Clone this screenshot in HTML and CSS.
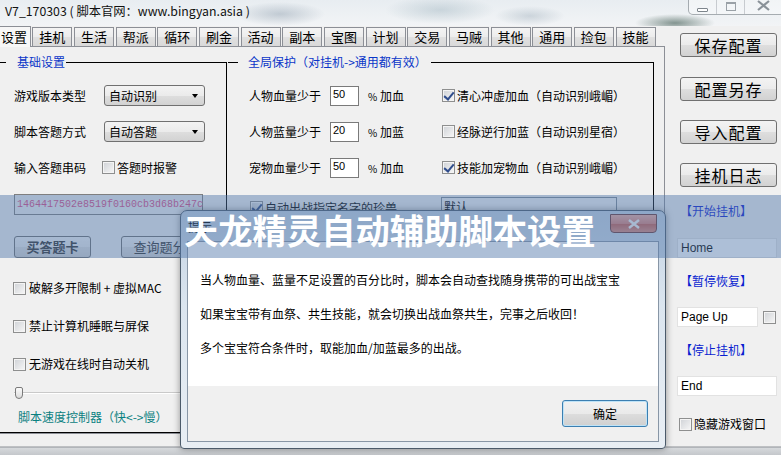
FILE: index.html
```html
<!DOCTYPE html>
<html lang="zh-CN">
<head>
  <meta charset="UTF-8">
  <meta name="viewport" content="width=device-width, initial-scale=1">
  <title>天龙精灵自动辅助脚本设置</title>
  <link rel="stylesheet" href="styles.css">
</head>
<body>

  <div class="titlebar">
    <div class="title-text">V7_170303 ( 脚本官网：www.bingyan.asia )</div>
    <div class="win-ctrls">
      <span class="ctrl ctrl-min"><i></i></span>
      <span class="ctrl ctrl-max"><i></i></span>
      <span class="ctrl ctrl-close">
        <svg width="13" height="11" viewBox="0 0 13 11"><path d="M1 1 L12 10 M12 1 L1 10" stroke="#8a9299" stroke-width="2.2" fill="none"/></svg>
      </span>
    </div>
  </div>

  <div class="main">
    <div class="tab-area">
      <div class="tabs">
        <span class="tab active">设置</span>
        <span class="tab">挂机</span>
        <span class="tab">生活</span>
        <span class="tab">帮派</span>
        <span class="tab">循环</span>
        <span class="tab">刷金</span>
        <span class="tab">活动</span>
        <span class="tab">副本</span>
        <span class="tab">宝图</span>
        <span class="tab">计划</span>
        <span class="tab">交易</span>
        <span class="tab">马贼</span>
        <span class="tab">其他</span>
        <span class="tab">通用</span>
        <span class="tab">捡包</span>
        <span class="tab">技能</span>
      </div>

      <div class="panel">
        <!-- 基础设置 -->
        <div class="group group-basic">
          <div class="legend">基础设置</div>
          <div class="row r-first">
            <span class="label">游戏版本类型</span>
            <span class="select">自动识别</span>
          </div>
          <div class="row r-next">
            <span class="label">脚本答题方式</span>
            <span class="select">自动答题</span>
          </div>
          <div class="row r-next">
            <span class="label">输入答题串码</span>
            <span class="cb cb-tight"></span><span class="cb-text">答题时报警</span>
          </div>
          <div class="serial">1464417502e8519f0160cb3d68b247c</div>
          <div class="row r-buttons">
            <span class="btn btn-bold">买答题卡</span>
            <span class="btn btn-gap">查询题分</span>
          </div>
          <div class="row r-check first">
            <span class="cb"></span><span class="cb-text">破解多开限制 + 虚拟MAC</span>
          </div>
          <div class="row r-check">
            <span class="cb"></span><span class="cb-text">禁止计算机睡眠与屏保</span>
          </div>
          <div class="row r-check">
            <span class="cb"></span><span class="cb-text">无游戏在线时自动关机</span>
          </div>
          <div class="slider"><span class="thumb"></span></div>
          <div class="speed-text">脚本速度控制器（快&lt;-&gt;慢）</div>
        </div>

        <!-- 全局保护 -->
        <div class="group group-guard">
          <div class="legend">全局保护（对挂机-&gt;通用都有效）</div>
          <div class="row r-first">
            <span class="g-label">人物血量少于</span>
            <span class="num">50</span>
            <span class="pct"><small>%</small> 加血</span>
            <span class="cb checked"></span><span class="cb-text">清心冲虚加血（自动识别峨嵋）</span>
          </div>
          <div class="row r-next">
            <span class="g-label">人物蓝量少于</span>
            <span class="num">20</span>
            <span class="pct"><small>%</small> 加蓝</span>
            <span class="cb"></span><span class="cb-text">经脉逆行加蓝（自动识别星宿）</span>
          </div>
          <div class="row r-next">
            <span class="g-label">宠物血量少于</span>
            <span class="num">50</span>
            <span class="pct"><small>%</small> 加血</span>
            <span class="cb checked"></span><span class="cb-text">技能加宠物血（自动识别峨嵋）</span>
          </div>
          <div class="row r-pet">
            <span class="cb checked"></span><span class="cb-text pet-text">自动出战指定名字的珍兽</span>
            <span class="pet-name">默认</span>
          </div>
        </div>
      </div>
    </div>

    <div class="side">
      <span class="side-btn first">保存配置</span>
      <span class="side-btn b2">配置另存</span>
      <span class="side-btn">导入配置</span>
      <span class="side-btn">挂机日志</span>

      <span class="hotkey-title first">【开始挂机】</span>
      <span class="hotkey">Home</span>
      <span class="hotkey-title">【暂停恢复】</span>
      <div class="hotkey-row">
        <span class="hotkey short">Page Up</span>
        <span class="cb"></span>
      </div>
      <span class="hotkey-title">【停止挂机】</span>
      <span class="hotkey">End</span>
      <div class="hide-row">
        <span class="cb"></span><span class="cb-text">隐藏游戏窗口</span>
      </div>
    </div>
  </div>

  <div class="dialog">
    <div class="dlg-title">
      <span>提示</span>
      <span class="dlg-close">
        <svg width="14" height="10" viewBox="0 0 14 10"><path d="M2 1 L12 9 M12 1 L2 9" stroke="#f4f4f4" stroke-width="2.4" fill="none"/></svg>
      </span>
    </div>
    <div class="dlg-client">
      <div class="dlg-body">
        <p>当人物血量、蓝量不足设置的百分比时，脚本会自动查找随身携带的可出战宝宝</p>
        <p>如果宝宝带有血祭、共生技能，就会切换出战血祭共生，完事之后收回！</p>
        <p>多个宝宝符合条件时，取能加血/加蓝最多的出战。</p>
      </div>
      <div class="dlg-foot">
        <span class="ok-btn">确定</span>
      </div>
    </div>
  </div>

  <div class="banner"><span>天龙精灵自动辅助脚本设置</span></div>

</body>
</html>
```

FILE: styles.css
```css
* {
  box-sizing: border-box;
}

body {
  margin: 0;
  width: 781px;
  height: 455px;
  overflow: hidden;
  position: relative;
  font-family: "Noto Sans CJK SC", "Liberation Sans", sans-serif;
  font-size: 12px;
  color: #000;
  background: linear-gradient(#f0f0f0 0, #f0f0f0 446px, #8c9096 447px, #d6d9dc 448px, #c4c7cb 455px);
}

/* ---- 标题栏 ---- */
.titlebar {
  height: 26px;
  display: flex;
  justify-content: space-between;
  align-items: flex-start;
  background:
    radial-gradient(45px 12px at 280px 14px, rgba(110, 130, 150, 0.35), transparent),
    radial-gradient(55px 14px at 440px 10px, rgba(120, 150, 165, 0.3), transparent),
    radial-gradient(35px 10px at 530px 16px, rgba(100, 125, 145, 0.25), transparent),
    radial-gradient(40px 9px at 675px 23px, rgba(40, 70, 60, 0.55), transparent),
    linear-gradient(#e8edf1, #f2f4f6);
}

.title-text {
  padding-left: 5px;
  line-height: 22px;
  font-size: 12.3px;
  color: #111;
}

.win-ctrls {
  display: flex;
  width: 93px;
  height: 15px;
  border: 1px solid rgba(70, 80, 90, 0.45);
  border-top: none;
  border-right: none;
  border-radius: 0 0 0 5px;
  background: rgba(255, 255, 255, 0.4);
}

.ctrl {
  display: flex;
  align-items: center;
  justify-content: center;
  border-left: 1px solid rgba(70, 80, 90, 0.25);
}

.ctrl:first-child {
  border-left: none;
}

.ctrl-min {
  width: 27px;
}

.ctrl-min i {
  width: 11px;
  height: 4px;
  margin-top: 5px;
  border: 1px solid #7d858c;
  border-radius: 1px;
  background: #fff;
}

.ctrl-max {
  width: 28px;
}

.ctrl-max i {
  width: 10px;
  height: 9px;
  margin-top: -2px;
  border: 1px solid #9aa1a7;
  border-top-width: 2px;
}

.ctrl-close {
  flex: 1;
  align-items: flex-start;
}

/* ---- 主体 ---- */
.main {
  display: flex;
  height: 429px;
}

.tab-area {
  width: 665px;
}

.tabs {
  display: flex;
  align-items: flex-end;
  height: 20px;
}

.tab {
  width: 40px;
  height: 19px;
  margin-left: 1.67px;
  border: 1px solid #8c8f96;
  border-bottom: none;
  background: linear-gradient(#f4f4f4, #ececec 50%, #e0e0e0 51%, #d9d9d9);
  font-size: 13px;
  line-height: 17px;
  text-align: center;
}

.tab.active {
  position: relative;
  z-index: 1;
  width: 35px;
  height: 21px;
  margin: 0 -0.33px -1px -4px;
  border-left: none;
  background: #f7f7f7;
  line-height: 19px;
  text-align: right;
  padding-right: 3px;
}

.panel {
  display: flex;
  height: 388px;
  padding-top: 15px;
  border: 1px solid #8c8f96;
  border-left: none;
  background: #f0f0f0;
}

.group {
  height: 371px;
  border-top: 1px solid #000;
  border-bottom: 1px solid #000;
  border-right: 1px solid #000;
}

.group-basic {
  width: 227px;
  padding-left: 14px;
}

.group-guard {
  width: 426px;
  margin-left: 1px;
  padding-left: 21px;
}

.legend {
  width: max-content;
  margin-top: -8px;
  line-height: 14px;
  background: #f0f0f0;
  color: #0a36c8;
}

.group-basic .legend {
  margin-left: -8px;
  padding: 0 1px 0 11px;
}

.group-guard .legend {
  margin-left: -11px;
  padding: 0 4px 0 10px;
}

.row {
  display: flex;
  align-items: center;
  height: 21px;
}

.r-first {
  margin-top: 16px;
}

.r-next {
  margin-top: 15px;
}

.label {
  width: 90px;
}

.select {
  position: relative;
  width: 101px;
  height: 21px;
  padding-left: 4px;
  border: 1px solid #707070;
  border-radius: 3px;
  background: linear-gradient(#f3f3f3, #ebebeb 50%, #dedede 51%, #d2d2d2);
  line-height: 19px;
}

.select::after {
  content: "";
  position: absolute;
  right: 6px;
  top: 8px;
  border-top: 4px solid #000;
  border-left: 3.5px solid transparent;
  border-right: 3.5px solid transparent;
}

/* 复选框 */
.cb {
  position: relative;
  flex: none;
  width: 13px;
  height: 13px;
  border: 1px solid #8e8f8f;
  background: linear-gradient(135deg, #cfd2d6, #f7f7f7);
  box-shadow: inset 0 0 0 1px #f4f4f4;
}

.cb.checked::after {
  content: "";
  position: absolute;
  left: 3px;
  top: 0;
  width: 4px;
  height: 8px;
  border: solid #2f4d8c;
  border-width: 0 2px 2px 0;
  transform: rotate(40deg);
}

.cb-tight {
  margin-left: -2px;
}

.cb-text {
  margin-left: 2px;
  line-height: 16px;
}

.serial {
  width: 189px;
  height: 21px;
  margin-top: 16px;
  padding-left: 2px;
  border: 1px solid #7f7f7f;
  background: #f0f0f0;
  font-family: "Liberation Mono", monospace;
  font-size: 10px;
  line-height: 19px;
  color: #dc4c86;
}

.r-buttons {
  height: 22px;
  margin-top: 21px;
}

.btn {
  width: 77px;
  height: 22px;
  border: 1px solid #707070;
  border-radius: 3px;
  background: linear-gradient(#f3f3f3, #ebebeb 50%, #dedede 51%, #d2d2d2);
  text-align: center;
  line-height: 20px;
  font-size: 13px;
  color: #333;
}

.btn-bold {
  font-weight: 700;
}

.btn-gap {
  margin-left: 30px;
}

.r-check {
  height: 20px;
  margin-top: 18px;
  margin-left: -1px;
}

.r-check.first {
  margin-top: 20px;
}

.r-check .cb-text {
  margin-left: 3px;
}

.slider {
  display: flex;
  align-items: center;
  width: 200px;
  height: 18px;
  margin-top: 10px;
  padding-left: 1px;
  background:
    linear-gradient(#c9c9c9, #c9c9c9) no-repeat 0 8px / 100% 1px,
    linear-gradient(#ffffff, #ffffff) no-repeat 0 9px / 100% 1px;
}

.thumb {
  width: 8px;
  height: 12px;
  border: 1px solid #7a7a7a;
  border-radius: 2px 2px 4px 4px;
  background: linear-gradient(#fbfbfb, #dcdcdc);
}

.speed-text {
  margin-top: 6px;
  padding-left: 4px;
  line-height: 18px;
  color: #0a8080;
}

/* 全局保护 */
.g-label {
  width: 81px;
}

.num {
  width: 29px;
  height: 20px;
  padding: 1px 0 0 2px;
  border: 1px solid #7a7a7a;
  background: #fff;
  font-family: "Liberation Sans", sans-serif;
  font-size: 11px;
  line-height: 13px;
}

.pct {
  width: 74px;
  margin-left: 9px;
}

.pct small {
  font-size: 10px;
}

.r-pet {
  margin-top: 19px;
}

.r-pet .cb {
  margin-left: 1px;
}

.pet-text {
  width: 176px;
}

.pet-name {
  width: 176px;
  height: 21px;
  padding-left: 2px;
  border: 1px solid #7f8a96;
  background: #f4f4f4;
  line-height: 17px;
}

/* ---- 右侧 ---- */
.side {
  width: 116px;
  padding-left: 15px;
  display: flex;
  flex-direction: column;
  align-items: flex-start;
}

.side-btn {
  width: 97px;
  height: 24px;
  margin-top: 19px;
  border: 1px solid #707070;
  border-radius: 3px;
  background: linear-gradient(#f3f3f3, #ebebeb 50%, #dedede 51%, #d2d2d2);
  font-size: 16px;
  line-height: 22px;
  letter-spacing: 1px;
  text-align: center;
}

.side-btn.first {
  margin-top: 7px;
}

.side-btn.b2 {
  margin-top: 20px;
}

.hotkey-title {
  margin-top: 15px;
  line-height: 16px;
  color: #0a1ed0;
}

.hotkey-title.first {
  margin-top: 16px;
}

.hotkey {
  width: 100px;
  height: 20px;
  margin-top: 18px;
  margin-left: -3px;
  padding-left: 3px;
  border: 1px solid #e2e2e2;
  background: #fff;
  font-family: "Liberation Sans", sans-serif;
  font-size: 12px;
  line-height: 18px;
}

.side > .hotkey-title.first + .hotkey {
  margin-top: 19px;
}

.hotkey-row {
  display: flex;
  align-items: center;
  margin-top: 18px;
  margin-left: -3px;
}

.hotkey.short {
  width: 81px;
  margin: 0;
}

.hotkey-row .cb {
  margin-left: 5px;
}

.hide-row {
  display: flex;
  align-items: center;
  height: 16px;
  margin-top: 20px;
  margin-left: -1px;
}

/* ---- 提示对话框 ---- */
.dialog {
  position: absolute;
  left: 180px;
  top: 210px;
  z-index: 5;
  display: flex;
  flex-direction: column;
  width: 486px;
  height: 239px;
  padding: 0 6px 6px;
  border: 1px solid #4b5a6a;
  border-radius: 7px 7px 4px 4px;
  background: linear-gradient(#c3d2e2, #dbe5ef 40%, #e8eef4);
  box-shadow: 0 0 7px rgba(0, 0, 0, 0.4);
}

.dlg-title {
  display: flex;
  justify-content: space-between;
  align-items: flex-start;
  height: 30px;
}

.dlg-title span:first-child {
  padding: 9px 0 0 1px;
  line-height: 14px;
}

.dlg-close {
  display: flex;
  align-items: center;
  justify-content: center;
  width: 47px;
  height: 19px;
  margin: 3px 2px 0 0;
  border: 1px solid #6e3a3a;
  border-radius: 0 0 4px 4px;
  background: linear-gradient(#ecada1, #d9837a 50%, #c75c4f 51%, #d98c7e);
}

.dlg-client {
  flex: 1;
  border: 1px solid #8896a6;
  display: flex;
  flex-direction: column;
}

.dlg-body {
  height: 144px;
  padding: 29px 12px 0;
  background: #fff;
}

.dlg-body p {
  margin: 0 0 16px;
  line-height: 18px;
}

.dlg-foot {
  flex: 1;
  display: flex;
  justify-content: flex-end;
  padding: 14px 10px 0 0;
  background: #f0f0f0;
}

.ok-btn {
  width: 86px;
  height: 27px;
  border: 1px solid #3c7fb1;
  border-radius: 3px;
  background: linear-gradient(#f2f2f2, #eaeaea 50%, #dddddd 51%, #d0d0d0);
  box-shadow: inset 0 0 0 1px #bfe3f7;
  text-align: center;
  line-height: 25px;
}

/* ---- 覆盖横幅 ---- */
.banner {
  position: absolute;
  left: 0;
  top: 195px;
  z-index: 10;
  display: flex;
  align-items: center;
  width: 781px;
  height: 63px;
  padding: 5px 0 0 184px;
  background: rgba(80, 120, 170, 0.47);
}

.banner span {
  color: #fff;
  font-size: 34.3px;
  font-weight: 700;
  line-height: 1;
}
```
